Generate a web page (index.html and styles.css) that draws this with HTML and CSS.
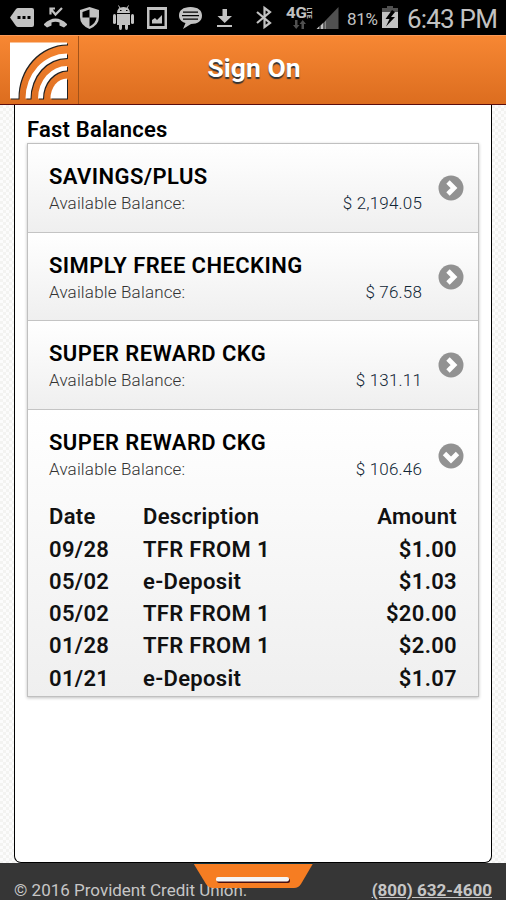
FILE: index.html
```html
<!DOCTYPE html>
<html lang="en">
<head>
    <meta charset="UTF-8">
    <meta name="viewport" content="width=device-width, initial-scale=1.0">
    <title>Sign On</title>
    <link rel="stylesheet" href="styles.css">
</head>
<body>
    <div class="status-bar">
        <svg class="first" width="34" height="35" viewBox="5 0 34 35">
            <path d="M10 17.5 L16 9 Q17 8 18 8 H32 Q34 8 34 10 V25 Q34 27 32 27 H18 Q17 27 16 26 Z"/>
            <path class="dark" d="M17.500 16h3v3h-3zM22.500 16h3v3h-3zM27.500 16h3v3h-3z"/>
        </svg>
        <svg width="34" height="35" viewBox="39 0 34 35">
            <path d="M44 24 Q55.500 13 67 24 V25 L64 27.500 L59.500 25.500 V22.500 Q55.500 21 51.500 22.500 V25.500 L47 27.500 L44 25 Z"/>
            <path class="line" d="M50.500 14.500 V8.500 H55 M50.500 8.500 L55.500 14.500 L62 8"/>
        </svg>
        <svg width="34" height="35" viewBox="73 0 34 35">
            <path d="M89.500 7 L99 10 V17 Q99 25 89.500 29 Q80 25 80 17 V10 Z"/>
            <path class="dark" d="M89.500 9.500 V17.500 H82.500 V12 ZM89.500 17.500 H96.500 Q96 23 89.500 26.500 Z"/>
        </svg>
        <svg width="34" height="35" viewBox="107 0 34 35">
            <path d="M117 13 Q117 7 123.500 7 Q130 7 130 13 ZM117 14 H130 V25 H128 V28 Q128 30 126.500 30 T125 28 V25 H122 V28 Q122 30 120.500 30 T119 28 V25 H117 Z"/>
            <rect x="113" y="14" width="3" height="10" rx="1.500"/>
            <rect x="131" y="14" width="3" height="10" rx="1.500"/>
            <path class="thin" d="M118.500 5.500 L120.500 9 M128.500 5.500 L126.500 9"/>
            <path class="dark" d="M120 10h1.500v1h-1.500zM126 10h1.500v1h-1.500z"/>
        </svg>
        <svg width="34" height="35" viewBox="141 0 34 35">
            <path d="M147 7 H167 V29 H147 Z"/>
            <path class="dark" d="M149.500 10 H164.500 V26 H149.500 Z"/>
            <path d="M152 23.500 V20 L155 18 L157 20 L162 15 V23.500 Z"/>
        </svg>
        <svg width="34" height="35" viewBox="175 0 34 35">
            <path d="M190.500 7 C198 7 202 10.500 202 15.500 C202 21 198 24 191 24 L183 29 L185.500 23 C181 21.500 179 19 179 15.500 C179 10.500 183 7 190.500 7 Z"/>
            <path class="dark" d="M183 11.500h15v1.300h-15zM182 15h17v1.300h-17zM183 18.500h15v1.300h-15z"/>
        </svg>
        <svg width="34" height="35" viewBox="209 0 34 35">
            <path d="M222.500 9 H227 V16 H232 L224.700 23 L217.500 16 H222.500 ZM217 25 H232 V27 H217 Z"/>
        </svg>
        <svg width="34" height="35" viewBox="243 0 34 35">
            <path class="line" d="M257 12 L270 23 L264.500 27 V8 L270 12 L257 23"/>
        </svg>
        <svg width="37" height="35" viewBox="277 0 37 35">
            <text class="network" x="286" y="18" textLength="21" lengthAdjust="spacingAndGlyphs">4G</text>
            <text class="lte" transform="translate(307 7.500) rotate(90)" textLength="11" lengthAdjust="spacingAndGlyphs">LTE</text>
            <path class="dim" d="M295 20 H297.500 V25 H299.500 L296.200 29 L293 25 H295 ZM301.500 29 H304 V24 H306 L302.700 20 L299.500 24 H301.500 Z"/>
        </svg>
        <svg width="30" height="35" viewBox="314 0 30 35">
            <path class="dim" d="M325 21 L338.500 7 V29 H325 Z"/>
            <path d="M316.500 29 L319.500 26 V29 ZM320.500 29 V25.500 L323.500 22.500 V29 ZM324.500 29 V22 L325.500 21 V29 Z"/>
        </svg>
        <span class="percent">81%</span>
        <svg class="battery" width="17" height="35" viewBox="382 0 17 35">
            <path class="dim" d="M387 6 H393 V8 H398 V12 H382 V8 H387 Z"/>
            <path d="M382 12 H398 V28 H382 Z"/>
            <path class="dark" d="M392 10 L385.500 19 H389.500 L386 26.500 L395 17 H391 L395 12 Z"/>
        </svg>
        <span class="clock">6:43 PM</span>
    </div>

    <div class="header">
        <div class="logo">
            <svg width="62" height="62" viewBox="0 0 62 62">
                <g class="logo-shadow">
                    <path d="M1 0.500 H58 V2.500 A49 53 0 0 0 9.500 56.500 H1 Z"/>
                    <path d="M58 11.500 A41.500 45 0 0 0 16.500 56.500 H21.500 A36.500 40.500 0 0 1 58 16 Z"/>
                    <path d="M58 24 A29 32.500 0 0 0 29 56.500 H34 A24 28 0 0 1 58 28.500 Z"/>
                    <path d="M58 36.500 A16.500 20 0 0 0 41.500 56.500 H58 Z"/>
                </g>
            </svg>
        </div>
        <h1 class="title">Sign On</h1>
    </div>

    <div class="content">
        <h2>Fast Balances</h2>
        <div class="account-list">
            <div class="account">
                <div class="account-info">
                    <h3>SAVINGS/PLUS</h3>
                    <p><span class="label">Available Balance:</span><span class="balance">$ 2,194.05</span></p>
                </div>
                <svg class="arrow" width="26" height="26" viewBox="0 0 26 26"><circle cx="13" cy="13" r="12.500"/><path d="M10 7 L16 13 L10 19"/></svg>
            </div>
            <div class="account">
                <div class="account-info">
                    <h3>SIMPLY FREE CHECKING</h3>
                    <p><span class="label">Available Balance:</span><span class="balance">$ 76.58</span></p>
                </div>
                <svg class="arrow" width="26" height="26" viewBox="0 0 26 26"><circle cx="13" cy="13" r="12.500"/><path d="M10 7 L16 13 L10 19"/></svg>
            </div>
            <div class="account">
                <div class="account-info">
                    <h3>SUPER REWARD CKG</h3>
                    <p><span class="label">Available Balance:</span><span class="balance">$ 131.11</span></p>
                </div>
                <svg class="arrow" width="26" height="26" viewBox="0 0 26 26"><circle cx="13" cy="13" r="12.500"/><path d="M10 7 L16 13 L10 19"/></svg>
            </div>
            <div class="account-open">
                <div class="account">
                    <div class="account-info">
                        <h3>SUPER REWARD CKG</h3>
                        <p><span class="label">Available Balance:</span><span class="balance">$ 106.46</span></p>
                    </div>
                    <svg class="arrow" width="26" height="26" viewBox="0 0 26 26"><circle cx="13" cy="13" r="12.500"/><path d="M6.500 10.500 L13 17 L19.500 10.500"/></svg>
                </div>
                <table class="history">
                    <tr><th class="date">Date</th><th>Description</th><th class="amount">Amount</th></tr>
                    <tr><td>09/28</td><td>TFR FROM 1</td><td class="amount">$1.00</td></tr>
                    <tr><td>05/02</td><td>e-Deposit</td><td class="amount">$1.03</td></tr>
                    <tr><td>05/02</td><td>TFR FROM 1</td><td class="amount">$20.00</td></tr>
                    <tr><td>01/28</td><td>TFR FROM 1</td><td class="amount">$2.00</td></tr>
                    <tr><td>01/21</td><td>e-Deposit</td><td class="amount">$1.07</td></tr>
                </table>
            </div>
        </div>
    </div>

    <div class="footer">
        <span class="copyright">© 2016 Provident Credit Union.</span>
        <a class="phone" href="tel:8006324600">(800) 632-4600</a>
        <!-- Pull-up tab -->
        <svg class="tab" width="122" height="27" viewBox="0 0 122 27">
            <path class="tab-shape" d="M0.500 0.500 H120 L108 21 Q105.500 25 101 25 H20 Q15.500 25 13 21 Z"/>
            <path class="tab-edge" d="M0 0.500 H120"/>
            <rect class="tab-shadow" x="24" y="15.500" width="73" height="4.500" rx="2"/>
            <rect class="tab-handle" x="23" y="14" width="73" height="4.500" rx="2"/>
        </svg>
    </div>
</body>
</html>
```
FILE: styles.css
```css
* {
    box-sizing: border-box;
}
body {
    display: flex;
    flex-direction: column;
    height: 900px;
    margin: 0;
    overflow: hidden;
    font-family: Roboto, sans-serif;
    background: repeating-conic-gradient(#f3f3f1 0% 25%, #fcfcfc 0% 50%) 0 0 / 6px 6px;
    color: #000;
}
h1, h2, h3, p {
    margin: 0;
}

/* Status bar */
.status-bar {
    display: flex;
    height: 35px;
    flex-shrink: 0;
    background: #000;
    color: #c2c2c2;
    line-height: 38px;
    white-space: nowrap;
}
.status-bar svg {
    flex-shrink: 0;
    fill: #c2c2c2;
}
.status-bar .first {
    margin-left: 5px;
}
.status-bar .dark {
    fill: #000;
}
.status-bar .dim {
    fill: #505050;
}
.status-bar .line {
    fill: none;
    stroke: #c2c2c2;
    stroke-width: 2.2;
}
.status-bar .thin {
    stroke: #c2c2c2;
    stroke-width: 1;
}
.network {
    font-size: 15px;
    font-weight: 700;
}
.lte {
    font-size: 7px;
    font-weight: 700;
}
.percent {
    width: 38px;
    padding-left: 3px;
    font-size: 17px;
    letter-spacing: -0.3px;
}
.clock {
    margin-left: 8px;
    font-size: 26px;
    letter-spacing: -0.8px;
}

/* Header */
.header {
    display: grid;
    grid-template-columns: 79px 1fr 79px;
    height: 70px;
    flex-shrink: 0;
    border-top: 1px solid #fb9a58;
    border-bottom: 1px solid #5b0d0d;
    background: linear-gradient(#f78733, #dc6d1f);
}
.logo {
    padding: 6px 0 0 9px;
    border-right: 1px solid #a35319;
}
.logo svg {
    display: block;
}
.logo-shadow {
    fill: #fff;
    filter: drop-shadow(1px 1.5px 0.6px #222);
}
.title {
    padding-left: 2px;
    color: #fff;
    font-size: 26.5px;
    font-weight: 700;
    line-height: 63px;
    text-align: center;
    text-shadow: 0 2px 1px #333;
}

/* Balances */
.content {
    flex: 1;
    margin: 0 14px 0;
    padding: 12px 12px 0;
    border: 1px solid #000;
    border-top: 0;
    border-radius: 0 0 7px 7px;
    background: #fff;
}
.content h2 {
    height: 26px;
    font-size: 22px;
    font-weight: 600;
    letter-spacing: 0.2px;
    line-height: 26px;
}
.account-list {
    width: 452px;
    height: 554px;
    border: 1px solid #c0c0c0;
    box-shadow: 0 1px 3px rgba(0, 0, 0, 0.25);
}
.account {
    display: flex;
    justify-content: space-between;
    align-items: center;
    height: 88.7px;
    padding: 0 14px 0 21px;
    border-bottom: 1px solid #c4c4c4;
    background: linear-gradient(#fff, #efefef);
}
.account-info {
    width: 373px;
    padding-top: 4px;
}
.account h3 {
    font-size: 22px;
    font-weight: 600;
    letter-spacing: 0.42px;
    line-height: 26px;
}
.account p {
    display: flex;
    justify-content: space-between;
    font-size: 17px;
    font-weight: 300;
    letter-spacing: 0.17px;
    line-height: 26px;
}
.label {
    color: #333;
}
.balance {
    color: #102635;
}
.arrow circle {
    fill: #929292;
}
.arrow path {
    fill: none;
    stroke: #fff;
    stroke-width: 4.8;
}
.account-open {
    height: 286px;
    background: linear-gradient(#fff, #efefef);
}
.account-open .account {
    height: 91px;
    border: 0;
    background: none;
}
.account-open .account-info {
    padding-top: 1px;
}
.history {
    width: 408px;
    margin-left: 21px;
    border-collapse: collapse;
    table-layout: fixed;
    color: #111;
    font-size: 22px;
    letter-spacing: 0.32px;
}
.history tr {
    height: 32.3px;
}
.history th, .history td {
    padding: 0;
    font-weight: 600;
    line-height: 32px;
    text-align: left;
}
.history .date {
    width: 94px;
}
.history .amount {
    text-align: right;
}

/* Footer */
.footer {
    display: flex;
    position: relative;
    justify-content: space-between;
    height: 37px;
    flex-shrink: 0;
    padding: 14px 14px 0;
    background: #363636;
    color: #c6c6c6;
    font-size: 17px;
    line-height: 26px;
}
.phone {
    color: #c6c6c6;
    font-weight: 700;
}
.tab {
    position: absolute;
    top: 0;
    left: 193px;
}
.tab-shape {
    fill: #f67d22;
}
.tab-edge {
    stroke: #113342;
}
.tab-shadow {
    fill: #4a1010;
}
.tab-handle {
    fill: #f5f5f5;
}
```
